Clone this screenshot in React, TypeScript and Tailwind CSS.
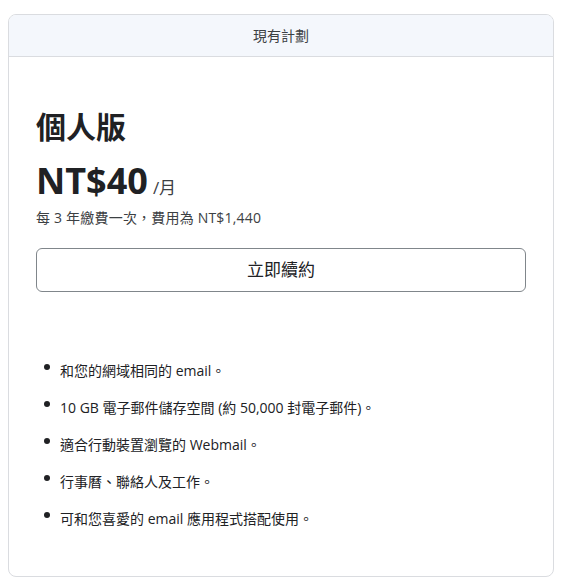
const features = [
  "和您的網域相同的 email。",
  "10 GB 電子郵件儲存空間 (約 50,000 封電子郵件)。",
  "適合行動裝置瀏覽的 Webmail。",
  "行事曆、聯絡人及工作。",
  "可和您喜愛的 email 應用程式搭配使用。",
];

export default function App() {
  return (
    <div
      className="min-h-screen bg-white pt-[14px] pl-2 pr-[7px] pb-[9px] text-[#202124]"
      style={{ fontFamily: '"Open Sans", "Noto Sans CJK TC", sans-serif' }}
    >
      <div className="border border-[#dadce0] rounded-lg overflow-hidden h-[563px] flex flex-col">
        {/* Header */}
        <div className="h-[42px] flex-shrink-0 bg-[#f4f7fc] border-b border-[#dadce0] flex items-center justify-center text-sm text-[#3c4043]">
          現有計劃
        </div>

        {/* Body */}
        <div className="px-[27px] pt-[52px]">
          <h2 className="text-[30px] font-bold leading-[36px]">個人版</h2>
          <div className="mt-[16px] flex items-end">
            <span className="text-[36px] font-bold leading-[40px]">NT$40</span>
            <span className="ml-[5px] text-[17px] text-[#3c4043] leading-[26px]">/月</span>
          </div>
          <p className="mt-[7px] text-sm tracking-[0.2px] text-[#3c4043] leading-5">每 3 年繳費一次，費用為 NT$1,440</p>

          <button className="mt-[20px] w-full h-[44px] border border-[#80868b] rounded-md text-[17px] text-[#202124] bg-white">
            立即續約
          </button>

          <ul className="mt-[69px] flex flex-col gap-[17px]">
            {features.map((f) => (
              <li key={f} className="flex items-start text-sm leading-5 text-[#202124]">
                <span className="w-[6px] h-[6px] rounded-full bg-[#202124] mt-[3px] ml-[8px] mr-[10px] flex-shrink-0" />
                <span>{f}</span>
              </li>
            ))}
          </ul>
        </div>
      </div>
    </div>
  );
}
